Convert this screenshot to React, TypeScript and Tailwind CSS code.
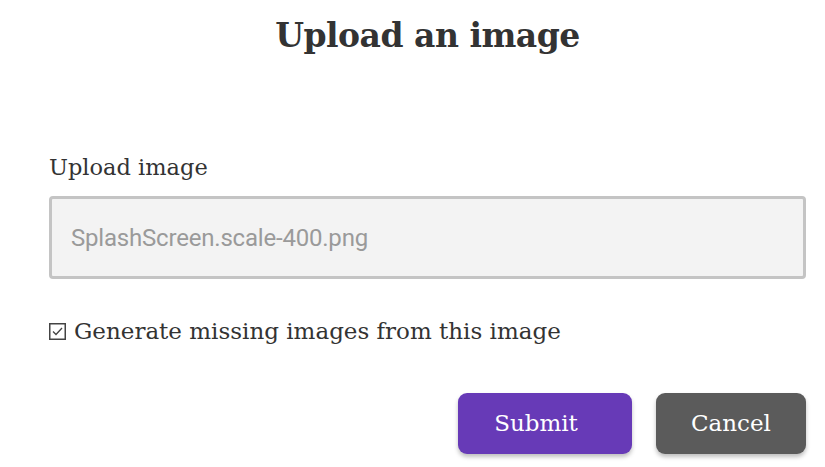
const App = () => {
  return (
    <div className="w-[825px] h-[467px] bg-white overflow-hidden pl-[49px] pr-[19px] pt-[12px] text-[#333333] font-['DejaVu_Serif',serif]">
      <h1 className="text-center text-[33px] font-bold leading-[48px] tracking-[-0.5px]">Upload an image</h1>

      <div className="mt-[92px] text-[22.5px] leading-[30px]">Upload image</div>

      <div className="mt-[14px] h-[83px] rounded-[4px] border-[3px] border-[#c4c4c4] bg-[#f3f3f3] flex items-center px-[19px]">
        <span className="font-['Roboto',sans-serif] text-[24px] text-[#9a9a9a] tracking-[-0.2px]">SplashScreen.scale-400.png</span>
      </div>

      <label className="mt-[37px] flex items-center gap-[8px] text-[23px] leading-[30px]">
        <svg width="17" height="17" viewBox="0 0 17 17" className="shrink-0">
          <rect x="0.75" y="0.75" width="15.5" height="15.5" fill="none" stroke="#444" strokeWidth="1.5" />
          <path d="M4 8.5 L7 11.5 L13 5" fill="none" stroke="#444" strokeWidth="1.3" />
        </svg>
        Generate missing images from this image
      </label>

      <div className="mt-[47px] flex justify-end gap-[24px]">
        <button className="w-[174px] h-[61px] pr-[18px] rounded-[9px] bg-[#673ab7] text-white text-[23px] shadow-[0_3px_4px_rgba(0,0,0,0.25)]">
          Submit
        </button>
        <button className="w-[150px] h-[61px] rounded-[9px] bg-[#5b5b5b] text-white text-[23px] shadow-[0_3px_4px_rgba(0,0,0,0.25)]">
          Cancel
        </button>
      </div>
    </div>
  );
};

export default App;
